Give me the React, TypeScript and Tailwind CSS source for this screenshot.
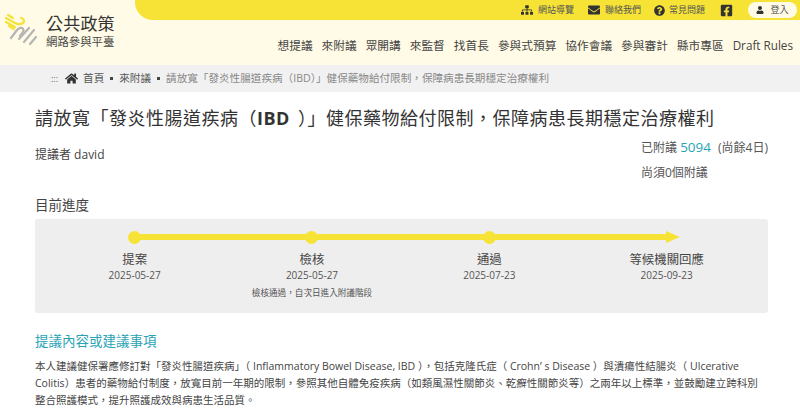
import { FaFacebookSquare, FaQuestionCircle, FaSitemap, FaEnvelope, FaUser, FaHome } from "react-icons/fa";

const navItems = ["想提議", "來附議", "眾開講", "來監督", "找首長", "參與式預算", "協作會議", "參與審計", "縣市專區", "Draft Rules"];

const steps = [
  { name: "提案", date: "2025-05-27" },
  { name: "檢核", date: "2025-05-27", note: "檢核通過，自次日進入附議階段" },
  { name: "通過", date: "2025-07-23" },
  { name: "等候機關回應", date: "2025-09-23" },
];

function Logo() {
  return (
    <svg width="40" height="40" viewBox="0 0 40 40" fill="none" strokeLinecap="round" strokeWidth="2.2">
      <path d="M8 5 L13 8" stroke="#f4e23a" />
      <path d="M6 8 L15 13 C19 15 24 14 24 11 C24 9 22 8 21 8" stroke="#f4e23a" />
      <path d="M6 12 L15 17" stroke="#f4e23a" />
      <path d="M9 16 L14 19" stroke="#f4e23a" />
      <path d="M11 28 L17 20 C20 16 25 18 23 22 L20 26" stroke="#b5b5b5" />
      <path d="M19 29 L29 18" stroke="#b5b5b5" />
      <path d="M24 32 L34 20" stroke="#b5b5b5" />
      <path d="M30 34 L36 27" stroke="#b5b5b5" />
    </svg>
  );
}

export default function App() {
  return (
    <div lang="zh-TW" className="h-[415px] w-[800px] overflow-hidden bg-white font-['Open_Sans','Noto_Sans_CJK_TC',sans-serif] text-[#444]">
      <header className="relative h-[65px] bg-[#fffbe6]">
        <div className="absolute right-0 top-0 flex h-5 w-[665px] items-center justify-end rounded-bl-[18px] bg-[#f6e336] pr-[3px] text-[9px] text-[#555]">
          <span className="flex items-center gap-[5px]"><FaSitemap className="text-[12px] text-[#333]" />網站導覽</span>
          <span className="ml-[14px] flex items-center gap-[5px]"><FaEnvelope className="text-[12px] text-[#333]" />聯絡我們</span>
          <span className="ml-[13px] flex items-center gap-[4px]"><FaQuestionCircle className="text-[11px] text-[#333]" />常見問題</span>
          <FaFacebookSquare className="ml-[15px] text-[13px] text-[#333]" />
          <span className="ml-[15px] flex h-[16px] w-[49px] items-center justify-center gap-[6px] rounded-full bg-[#fffbe6]"><FaUser className="text-[8px] text-[#333]" />登入</span>
        </div>
        <div className="flex h-full items-start pt-[10px]">
          <Logo />
          <div className="ml-[6px] pt-[3px]">
            <div className="text-[17px] leading-[22px] tracking-[0.2px] text-[#333]">公共政策</div>
            <div className="text-[11.4px] leading-[14px] text-[#444]">網路參與平臺</div>
          </div>
        </div>
        <nav className="absolute right-[7px] top-[36px] flex gap-[9px] text-[11.7px] leading-[18px] text-[#444]">
          {navItems.map((item) => (
            <span key={item}>{item}</span>
          ))}
        </nav>
      </header>

      <div className="flex h-[27px] items-center bg-[#f1f1f1] pl-[51px] text-[10.6px] text-[#555]">
        <span className="mr-[7px] text-[9px] text-[#666]">:::</span>
        <FaHome className="mr-[5px] text-[13px] text-[#333]" />
        <span>首頁</span>
        <span className="mx-[6px] h-[3px] w-[3px] bg-[#444]" />
        <span>來附議</span>
        <span className="mx-[6px] h-[3px] w-[3px] bg-[#444]" />
        <span className="text-[#888]">請放寬「發炎性腸道疾病（IBD）」健保藥物給付限制，保障病患長期穩定治療權利</span>
      </div>

      <main className="pl-[35px] pr-[32px]">
        <h1 className="mt-[13px] whitespace-nowrap text-[18px] leading-[26px] tracking-[0.5px] text-[#333]">
          請放寬「發炎性腸道疾病（<span className="mr-[8px] font-bold">IBD</span>）」健保藥物給付限制，保障病患長期穩定治療權利
        </h1>
        <div className="mt-[4px] flex justify-between">
          <div className="pt-[11px] text-[12px] leading-[18px]">提議者 david</div>
          <div className="w-[127px] text-[12px] text-[#555]">
            <div className="leading-[25px]">
              已附議 <span className="text-[13.5px] text-[#2aa3b5]">5094</span><span className="ml-[7px]">(尚餘4日)</span>
            </div>
            <div className="leading-[25px]">尚須0個附議</div>
          </div>
        </div>
        <h2 className="mt-[10px] text-[13.5px] leading-[20px]">目前進度</h2>
        <section className="relative mt-[4px] h-[94px] rounded-[3px] bg-[#eeeeee]">
          <div className="absolute left-[100px] top-[15px] h-[6px] w-[531px] bg-[#f6e336]" />
          <div className="absolute left-[631px] top-[12px] h-0 w-0 border-y-[6px] border-l-[14px] border-y-transparent border-l-[#f6e336]" />
          <div className="grid grid-cols-[repeat(4,177.33px)] pl-[11px] pt-[12px] text-center">
            {steps.map((s, i) => (
              <div key={s.name} className="flex flex-col items-center">
                {i < 3 ? <div className="h-[13px] w-[13px] rounded-full bg-[#f6e336]" /> : <div className="h-[13px]" />}
                <div className="mt-[7px] text-[12.4px] leading-[17px] text-[#444]">{s.name}</div>
                <div className="text-[10px] leading-[14px] text-[#555]">{s.date}</div>
                {s.note && <div className="mt-[4px] whitespace-nowrap text-[8.6px] leading-[14px] text-[#555]">{s.note}</div>}
              </div>
            ))}
          </div>
        </section>
        <h2 className="mt-[18px] text-[13.5px] leading-[20px] text-[#2aa3b5]">提議內容或建議事項</h2>
        <p className="mt-[7px] text-[10.5px] leading-[17px] text-[#444]">
          本人建議健保署應修訂對「發炎性腸道疾病」（ Inflammatory Bowel Disease, IBD ），包括克隆氏症（ Crohn’ s Disease ）與潰瘍性結腸炎（ Ulcerative Colitis）患者的藥物給付制度，放寬目前一年期的限制，參照其他自體免疫疾病（如類風濕性關節炎、乾癬性關節炎等）之兩年以上標準，並鼓勵建立跨科別整合照護模式，提升照護成效與病患生活品質。
        </p>
      </main>
    </div>
  );
}
